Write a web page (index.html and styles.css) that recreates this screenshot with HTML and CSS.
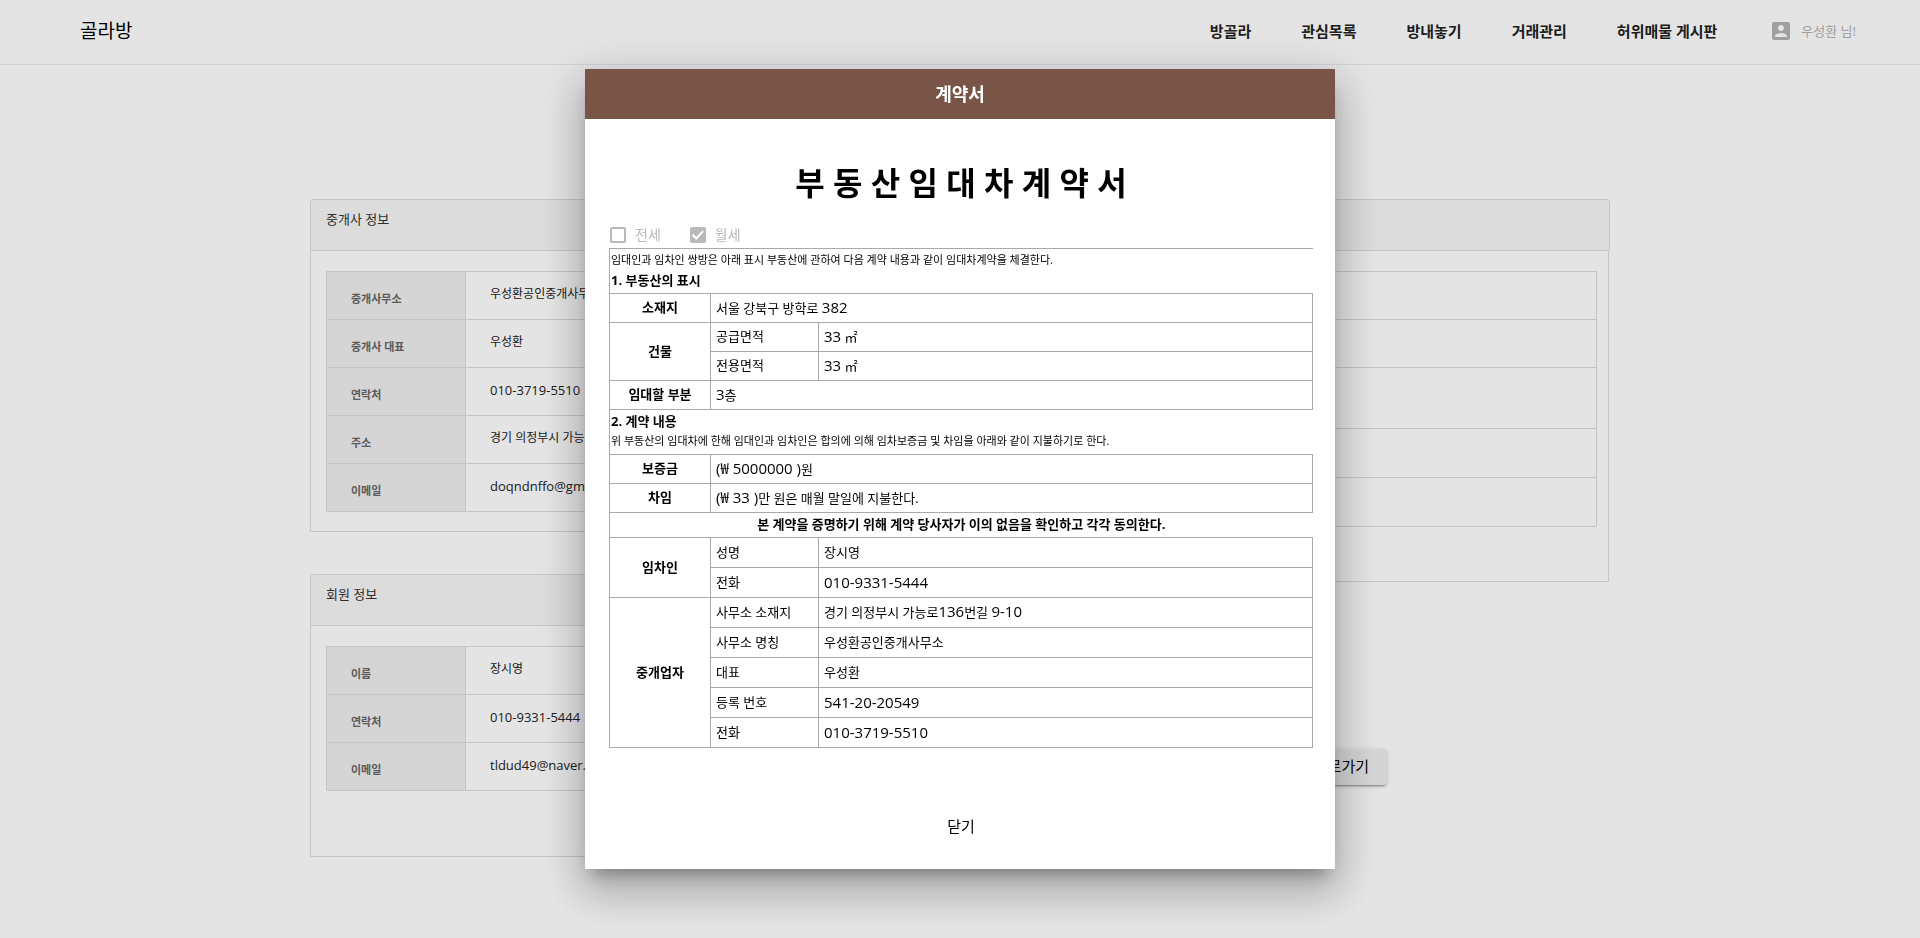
FILE: index.html
```html
<!DOCTYPE html>
<html lang="ko">
<head>
<meta charset="utf-8">
<title>골라방</title>
<link rel="stylesheet" href="styles.css">
</head>
<body>
<header class="topbar">
  <a class="brand" href="#">골라방</a>
  <nav class="menu">
    <a href="#">방골라</a>
    <a href="#">관심목록</a>
    <a href="#">방내놓기</a>
    <a href="#">거래관리</a>
    <a href="#">허위매물 게시판</a>
  </nav>
  <a class="user" href="#">
    <svg class="user-icon" viewBox="3 3 18 18" aria-hidden="true"><path d="M3 5v14c0 1.100.9 2 2 2h14c1.100 0 2-.9 2-2V5c0-1.100-.9-2-2-2H5c-1.110 0-2 .9-2 2zm12 4c0 1.660-1.340 3-3 3s-3-1.340-3-3 1.340-3 3-3 3 1.340 3 3zm-9 8c0-2 4-3.100 6-3.100s6 1.100 6 3.100v1H6v-1z"/></svg>
    <span>우성환 님!</span>
  </a>
</header>

<main class="page">
  <div class="column">
    <section class="panel">
      <h2 class="panel-head">중개사 정보</h2>
      <div class="panel-body">
        <table class="info">
          <tr><th scope="row">중개사무소</th><td>우성환공인중개사무소</td></tr>
          <tr><th scope="row">중개사 대표</th><td>우성환</td></tr>
          <tr><th scope="row">연락처</th><td class="latin">010-3719-5510</td></tr>
          <tr><th scope="row">주소</th><td>경기 의정부시 가능로136번길 9-10</td></tr>
          <tr><th scope="row">이메일</th><td class="latin">doqndnffo@gmail.com</td></tr>
        </table>
      </div>
    </section>
    <section class="panel">
      <h2 class="panel-head">회원 정보</h2>
      <div class="panel-body member">
        <table class="info">
          <tr><th scope="row">이름</th><td>장시영</td></tr>
          <tr><th scope="row">연락처</th><td class="latin">010-9331-5444</td></tr>
          <tr><th scope="row">이메일</th><td class="latin">tldud49@naver.com</td></tr>
        </table>
      </div>
    </section>
  </div>
  <div class="column side">
    <section class="panel">
      <div class="panel-head overhang"></div>
      <div class="panel-body deal">
        <table class="info">
          <tr><th></th><td></td></tr>
          <tr><th></th><td></td></tr>
          <tr class="tall"><th></th><td></td></tr>
          <tr class="mid"><th></th><td></td></tr>
          <tr class="mid"><th></th><td></td></tr>
        </table>
      </div>
    </section>
    <button class="go" type="button">바로가기</button>
  </div>
</main>

<div class="overlay">
  <div class="dialog" role="dialog" aria-modal="true" aria-labelledby="dialog-title">
    <h2 class="dialog-head" id="dialog-title">계약서</h2>
    <div class="dialog-body">
      <h1 class="title">부 동 산 임 대 차 계 약 서</h1>
      <div class="kinds">
        <label><input type="checkbox" disabled><span>전세</span></label>
        <label><input type="checkbox" checked disabled><span>월세</span></label>
      </div>
      <table class="contract">
        <colgroup><col class="c1"><col class="c2"><col></colgroup>
        <tr class="intro"><td colspan="3"><p>임대인과 임차인 쌍방은 아래 표시 부동산에 관하여 다음 계약 내용과 같이 임대차계약을 체결한다.</p><h3>1. 부동산의 표시</h3></td></tr>
        <tr><th scope="row">소재지</th><td colspan="2">서울 강북구 방학로 <span class="num">382</span></td></tr>
        <tr><th scope="rowgroup" rowspan="2">건물</th><td>공급면적</td><td><span class="num">33</span> ㎡</td></tr>
        <tr><td>전용면적</td><td><span class="num">33</span> ㎡</td></tr>
        <tr><th scope="row">임대할 부분</th><td colspan="2"><span class="num">3</span>층</td></tr>
        <tr class="intro"><td colspan="3"><h3>2. 계약 내용</h3><p>위 부동산의 임대차에 한해 임대인과 임차인은 합의에 의해 임차보증금 및 차임을 아래와 같이 지불하기로 한다.</p></td></tr>
        <tr><th scope="row">보증금</th><td colspan="2"><span class="num">(₩ 5000000 )</span>원</td></tr>
        <tr><th scope="row">차임</th><td colspan="2"><span class="num">(₩ 33 )</span>만 원은 매월 말일에 지불한다.</td></tr>
        <tr class="notice"><th colspan="3">본 계약을 증명하기 위해 계약 당사자가 이의 없음을 확인하고 각각 동의한다.</th></tr>
        <tr class="party"><th scope="rowgroup" rowspan="2">임차인</th><td>성명</td><td>장시영</td></tr>
        <tr class="party"><td>전화</td><td class="num">010-9331-5444</td></tr>
        <tr class="party"><th scope="rowgroup" rowspan="5">중개업자</th><td>사무소 소재지</td><td>경기 의정부시 가능로<span class="num">136</span>번길 <span class="num">9-10</span></td></tr>
        <tr class="party"><td>사무소 명칭</td><td>우성환공인중개사무소</td></tr>
        <tr class="party"><td>대표</td><td>우성환</td></tr>
        <tr class="party"><td>등록 번호</td><td class="num">541-20-20549</td></tr>
        <tr class="party"><td>전화</td><td class="num">010-3719-5510</td></tr>
      </table>
      <button class="close" type="button">닫기</button>
    </div>
  </div>
</div>
</body>
</html>
```
FILE: styles.css
```css
* { box-sizing: border-box; }

body {
  margin: 0;
  min-height: 100vh;
  background: #fff;
  color: #000;
  font: 13px/20px "Open Sans", "Noto Sans CJK KR", sans-serif;
}

h1, h2, h3, p { margin: 0; }
a { color: inherit; text-decoration: none; }
button { font: inherit; color: inherit; border: 0; }
table { border-collapse: collapse; width: 100%; }

.topbar {
  display: flex;
  align-items: center;
  height: 65px;
  padding: 0 64px 2px 80px;
  border-bottom: 1px solid #ececec;
}
.brand { font-size: 19px; }
.menu {
  display: flex;
  gap: 50px;
  margin-left: auto;
  font-size: 15px;
  font-weight: 700;
  color: #222;
}
.user {
  display: flex;
  align-items: center;
  gap: 11px;
  margin-left: 55px;
  color: #b3b3b3;
}
.user-icon { width: 18px; height: 18px; fill: #b3b3b3; }

.page {
  display: grid;
  grid-template-columns: 1fr 1fr;
  gap: 20px;
  max-width: 1300px;
  margin: 134px auto 0;
  padding-right: 1px;
}
.column { display: flex; flex-direction: column; gap: 42px; }
.side { gap: 167px; align-items: stretch; }

.panel-head {
  height: 52px;
  padding: 9px 15px;
  border: 1px solid #ddd;
  border-radius: 4px 4px 0 0;
  background: #f6f6f6;
  color: #333;
  font-size: 13px;
  font-weight: 400;
}
.overhang { margin-right: -1px; }
.panel-body {
  padding: 20px 11px 19px 15px;
  border: 1px solid #ddd;
  border-top: 0;
}
.member { padding-bottom: 65px; }
.deal { padding-bottom: 54px; }

.info tr { height: 48px; }
.info .tall { height: 61px; }
.info .mid { height: 49px; }
.info th, .info td { border: 1px solid #ddd; padding: 0 24px; text-align: left; }
.info th {
  width: 139px;
  padding-top: 6px;
  background: #efefef;
  color: #666;
  font-size: 11px;
}
.info td { padding-bottom: 3px; color: #222; font-size: 12px; }
.info .latin { padding-bottom: 4px; font-size: 13px; }

.go {
  align-self: flex-end;
  height: 36px;
  margin-right: 222px;
  padding: 0 18px 2px;
  border-radius: 4px;
  background: #eee;
  font-size: 15px;
  box-shadow: 0 3px 1px -2px rgba(0, 0, 0, .2), 0 2px 2px rgba(0, 0, 0, .14), 0 1px 5px rgba(0, 0, 0, .12);
}

.overlay {
  position: fixed;
  inset: 0;
  display: flex;
  align-items: center;
  justify-content: center;
  background: rgba(0, 0, 0, .105);
}
.dialog {
  width: 100%;
  max-width: 750px;
  background: #fff;
  box-shadow: 0 11px 15px -7px rgba(0, 0, 0, .3), 0 24px 38px 3px rgba(0, 0, 0, .16), 0 9px 46px 8px rgba(0, 0, 0, .14);
}
.dialog-head {
  background: #795548;
  color: #fff;
  font-size: 18px;
  line-height: 50px;
  text-align: center;
}
.dialog-body {
  display: flex;
  flex-direction: column;
  padding: 40px 22px 24px 24px;
}
.title { font-size: 32px; line-height: 48px; text-align: center; }

.kinds { display: flex; gap: 29px; margin: 18px 0 3px 1px; }
.kinds label {
  display: flex;
  align-items: center;
  gap: 9px;
  color: #b9b9b9;
  font-size: 14px;
}
.kinds input {
  display: grid;
  place-items: center;
  appearance: none;
  width: 16px;
  height: 16px;
  margin: 0;
  border: 2px solid #b9b9b9;
  border-radius: 2px;
}
.kinds input:checked { background: #b9b9b9; }
.kinds input:checked::after {
  content: "";
  width: 12px;
  height: 10px;
  background: #fff;
  clip-path: polygon(0 52%, 12% 38%, 38% 70%, 88% 4%, 100% 18%, 38% 100%);
}

.contract tr { height: 29px; }
.contract th, .contract td { padding: 0 5px 2px; border: 1px solid #a9a9a9; text-align: left; }
.contract th { text-align: center; }
.contract .c1 { width: 101px; }
.contract .c2 { width: 108px; }
.contract .party { height: 30px; }
.contract .intro { height: 45px; }
.contract .intro td { padding: 0 1px 2px; border-right-style: hidden; }
.contract .notice { height: 25px; }
.contract .notice th { border-right-style: hidden; }
.contract h3 { font-size: 13px; }
.contract p { font-size: 11px; }
.num { font-size: 15px; }

.close {
  align-self: center;
  height: 36px;
  margin-top: 61px;
  padding: 0 16px 2px;
  background: none;
  font-size: 15px;
}
```
